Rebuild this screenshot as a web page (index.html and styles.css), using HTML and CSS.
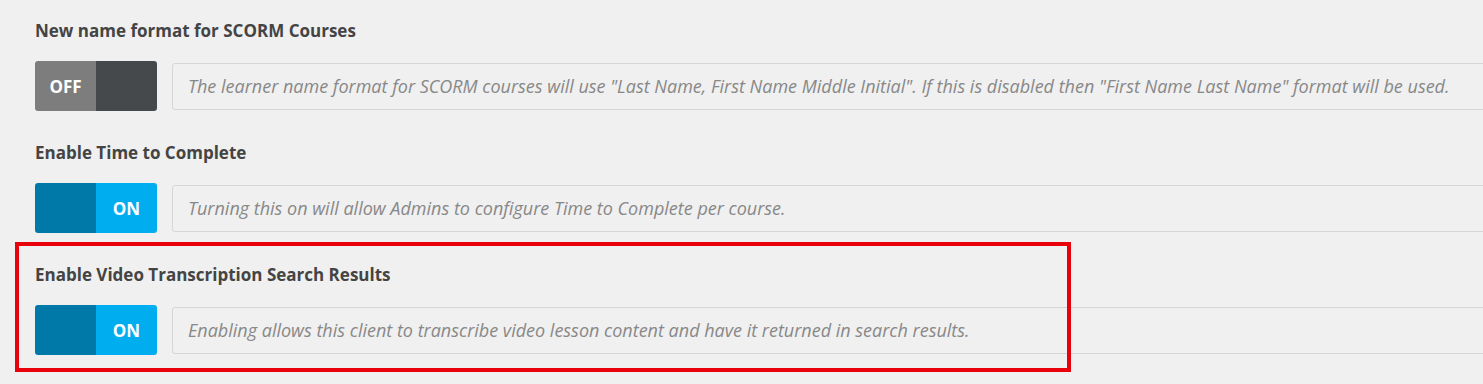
FILE: index.html
```html
<!DOCTYPE html>
<html lang="en">
<head>
    <meta charset="UTF-8">
    <meta name="viewport" content="width=device-width, initial-scale=1.0">
    <title>Settings</title>
    <link rel="stylesheet" href="styles.css">
</head>
<body>
    <main class="configuracoes">
        <section class="opcao">
            <h3>New name format for SCORM Courses</h3>
            <div class="linha">
                <div class="chave desligada">
                    <span class="lado lado-a">OFF</span>
                    <span class="lado lado-b"></span>
                </div>
                <div class="descricao">The learner name format for SCORM courses will use "Last Name, First Name Middle Initial". If this is disabled then "First Name Last Name" format will be used.</div>
            </div>
        </section>

        <section class="opcao">
            <h3>Enable Time to Complete</h3>
            <div class="linha">
                <div class="chave ligada">
                    <span class="lado lado-a"></span>
                    <span class="lado lado-b">ON</span>
                </div>
                <div class="descricao">Turning this on will allow Admins to configure Time to Complete per course.</div>
            </div>
        </section>

        <section class="opcao">
            <h3>Enable Video Transcription Search Results</h3>
            <div class="linha">
                <div class="chave ligada">
                    <span class="lado lado-a"></span>
                    <span class="lado lado-b">ON</span>
                </div>
                <div class="descricao">Enabling allows this client to transcribe video lesson content and have it returned in search results.</div>
            </div>
        </section>

        <div class="destaque"></div>
    </main>
</body>
</html>
```

FILE: styles.css
```css
body {
    margin: 0;
    padding: 0;
    background-color: #f0f0f0;
    font-family: 'Open Sans', 'Lato', sans-serif;
    color: #444;
    overflow: hidden;
}

.configuracoes {
    position: relative;
    padding: 20px 0 0 35px;
}

.opcao {
    margin-bottom: 31px;
}

.opcao h3 {
    margin: 0 0 19px 0;
    font-size: 17px;
    line-height: 22px;
    font-weight: bold;
    color: #444;
}

.linha {
    display: flex;
    align-items: center;
    margin-right: -20px;
}

.chave {
    display: flex;
    flex: 0 0 122px;
    height: 50px;
    border-radius: 3px;
    overflow: hidden;
}

.lado {
    flex: 1;
    display: flex;
    align-items: center;
    justify-content: center;
    color: #fff;
    font-weight: bold;
    font-size: 17px;
}

.desligada .lado-a { background-color: #7d7d7d; }
.desligada .lado-b { background-color: #46494c; }
.ligada .lado-a { background-color: #0079a8; }
.ligada .lado-b { background-color: #00aeef; }

.descricao {
    flex: 1;
    height: 45px;
    margin-left: 15px;
    padding-left: 15px;
    display: flex;
    align-items: center;
    border: 1px solid #d6d6d6;
    border-radius: 3px;
    font-style: italic;
    font-size: 18px;
    color: #888;
    white-space: nowrap;
}

/* moldura vermelha por cima da terceira opcao */
.destaque {
    position: absolute;
    left: 15px;
    top: 242px;
    width: 1048px;
    height: 122px;
    border: 4px solid #e8000b;
}
```
